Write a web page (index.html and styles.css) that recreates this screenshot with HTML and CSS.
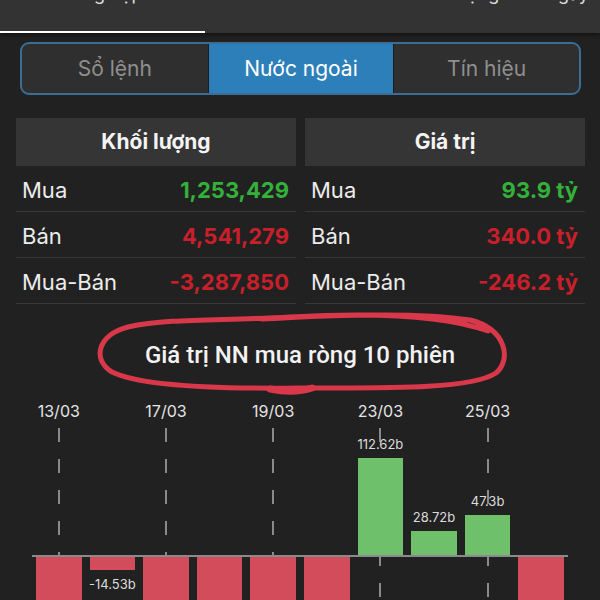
FILE: index.html
```html
<!DOCTYPE html>
<html lang="vi">
<head>
    <meta charset="UTF-8">
    <meta name="viewport" content="width=device-width, initial-scale=1.0">
    <title>Nước ngoài</title>
    <link rel="stylesheet" href="styles.css">
</head>
<body>
    <div class="topbar">
        <div class="tab active"><span>Tổng hợp</span></div>
        <div class="tab"><span>Chi tiết</span></div>
        <div class="tab"><span>Biến động theo ngày</span></div>
    </div>

    <div class="segmented">
        <div class="seg">Sổ lệnh</div>
        <div class="seg active">Nước ngoài</div>
        <div class="seg">Tín hiệu</div>
    </div>

    <div class="stats">
        <div class="table">
            <div class="table-head">Khối lượng</div>
            <div class="row"><span>Mua</span><b class="up">1,253,429</b></div>
            <div class="row"><span>Bán</span><b class="down">4,541,279</b></div>
            <div class="row"><span>Mua-Bán</span><b class="down">-3,287,850</b></div>
        </div>
        <div class="table">
            <div class="table-head">Giá trị</div>
            <div class="row"><span>Mua</span><b class="up">93.9 tỷ</b></div>
            <div class="row"><span>Bán</span><b class="down">340.0 tỷ</b></div>
            <div class="row"><span>Mua-Bán</span><b class="down">-246.2 tỷ</b></div>
        </div>
    </div>

    <div class="chart-title">
        Giá trị NN mua ròng 10 phiên
        <!-- hand-drawn circle on top of the screenshot -->
        <svg class="scribble" viewBox="90 305 430 100" width="430" height="100">
            <path d="M 262 320 C 330 316, 420 313, 470 321 C 506 330, 512 360, 496 374 C 470 391, 380 389, 300 389 C 220 390, 140 387, 112 373 C 92 361, 97 336, 128 328 C 170 319, 220 322, 290 318 C 360 314, 440 315, 488 332"
                  fill="none" stroke="#d8384a" stroke-width="5" stroke-linecap="round" stroke-linejoin="round"/>
            <path d="M 270 390 C 285 393, 300 393, 312 389" fill="none" stroke="#d8384a" stroke-width="7" stroke-linecap="round"/>
        </svg>
    </div>

    <div class="chart">
        <div class="dates">
            <span>13/03</span><i></i>
            <span>17/03</span><i></i>
            <span>19/03</span><i></i>
            <span>23/03</span><i></i>
            <span>25/03</span><i></i>
        </div>
        <div class="plot">
            <div class="slot guide">
                <div class="pos"></div>
                <div class="neg"><div class="bar red" style="height: 160px"></div></div>
            </div>
            <div class="slot">
                <div class="pos"></div>
                <div class="neg"><div class="bar red" style="height: 12.5px"></div><div class="val">-14.53b</div></div>
            </div>
            <div class="slot guide">
                <div class="pos"></div>
                <div class="neg"><div class="bar red" style="height: 160px"></div></div>
            </div>
            <div class="slot">
                <div class="pos"></div>
                <div class="neg"><div class="bar red" style="height: 160px"></div></div>
            </div>
            <div class="slot guide">
                <div class="pos"></div>
                <div class="neg"><div class="bar red" style="height: 160px"></div></div>
            </div>
            <div class="slot">
                <div class="pos"></div>
                <div class="neg"><div class="bar red" style="height: 160px"></div></div>
            </div>
            <div class="slot guide">
                <div class="pos"><div class="val">112.62b</div><div class="bar green" style="height: 97px"></div></div>
                <div class="neg"></div>
            </div>
            <div class="slot">
                <div class="pos"><div class="val">28.72b</div><div class="bar green" style="height: 24px"></div></div>
                <div class="neg"></div>
            </div>
            <div class="slot guide">
                <div class="pos"><div class="val">47.3b</div><div class="bar green" style="height: 40px"></div></div>
                <div class="neg"></div>
            </div>
            <div class="slot">
                <div class="pos"></div>
                <div class="neg"><div class="bar red" style="height: 160px"></div></div>
            </div>
        </div>
    </div>
</body>
</html>
```

FILE: styles.css
```css
body {
    margin: 0;
    background-color: #212121;
    color: #ececec;
    font-family: Inter, "Noto Sans", sans-serif;
    overflow: hidden;
}
.topbar {
    display: flex;
    height: 33px;
    background-color: #333;
    box-shadow: 0 2px 4px rgba(0, 0, 0, 0.45);
    overflow: hidden;
}
.tab {
    flex: 1;
    text-align: center;
    font-size: 18px;
    line-height: 20px;
    color: #ddd;
}
.tab span {
    display: block;
    margin-top: -16px;
}
.tab.active {
    flex: 0 0 205px;
    box-shadow: inset 0 -2px 0 #fff;
}
.segmented {
    display: grid;
    grid-template-columns: repeat(3, 1fr);
    height: 49px;
    margin: 9px 19px 0 20px;
    border: 2px solid #3b6d95;
    border-radius: 9px;
    overflow: hidden;
    background-color: #2f2f2f;
}
.seg {
    display: flex;
    align-items: center;
    justify-content: center;
    font-size: 21px;
    color: #8f8f8f;
}
.seg + .seg {
    border-left: 1px solid #1d1d1d;
}
.seg.active {
    background-color: #2d7fba;
    color: #fff;
}
.stats {
    display: grid;
    grid-template-columns: 280px 280px;
    gap: 9px;
    margin: 23px 0 0 16px;
}
.table-head {
    height: 48px;
    line-height: 48px;
    text-align: center;
    background-color: #353535;
    font-size: 21px;
    font-weight: 700;
    color: #f4f4f4;
}
.row {
    display: flex;
    align-items: center;
    justify-content: space-between;
    height: 43px;
    padding: 2px 7px 0 6px;
    border-bottom: 1px solid #383838;
    font-size: 22px;
}
.row b {
    font-weight: 700;
}
.up {
    color: #34b13b;
}
.down {
    color: #c8202b;
}
.chart-title {
    position: relative;
    margin-top: 37px;
    line-height: 28px;
    text-align: center;
    font-family: Roboto, sans-serif;
    font-size: 24px;
    font-weight: 500;
    color: #f2f2f2;
}
.scribble {
    position: absolute;
    left: 90px;
    top: -37px;
}
.chart {
    margin: 32px 32px 0 32px;
}
.dates {
    display: grid;
    grid-template-columns: repeat(10, 1fr);
    line-height: 20px;
    font-size: 16px;
    color: #e4e4e4;
}
.dates span {
    justify-self: center;
    white-space: nowrap;
}
.plot {
    display: grid;
    grid-template-columns: repeat(10, 1fr);
    margin-top: 7px;
}
.slot.guide {
    background-image: linear-gradient(to bottom, #8a8a8a 14px, transparent 14px);
    background-size: 2px 31px;
    background-repeat: repeat-y;
    background-position: center top;
}
.pos {
    display: flex;
    flex-direction: column;
    justify-content: flex-end;
    height: 127px;
}
.neg {
    height: 100px;
    border-top: 2px solid #8a8a8a;
}
.bar {
    margin: 0 4px;
}
.bar.green {
    background-color: #6ec06a;
}
.bar.red {
    background-color: #d34c5c;
}
.val {
    margin: 6px 0;
    line-height: 16px;
    text-align: center;
    font-size: 13px;
    color: #dcdcdc;
}
```
